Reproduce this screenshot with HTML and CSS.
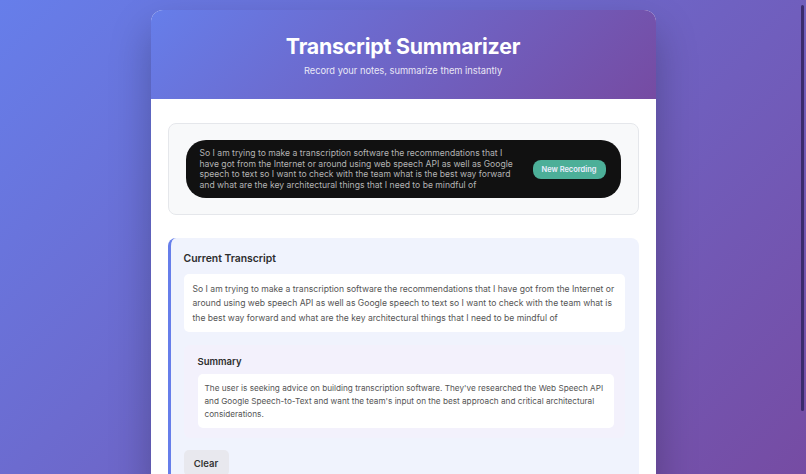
FILE: index.html
```html
<!DOCTYPE html>
<html lang="en">
  <head>
    <meta charset="UTF-8" />
    <title>Transcript Summarizer</title>
    <link rel="stylesheet" href="styles.css">
  </head>
  <body>
    <div class="app">
      <div class="header">
        <h1>Transcript Summarizer</h1>
        <p>Record your notes, summarize them instantly</p>
      </div>

      <div class="main">
        <div class="recorder">
          <div class="recorder-pill">
            <div class="live-text">So I am trying to make a transcription software the recommendations that I have got from the Internet or around using web speech API as well as Google speech to text so I want to check with the team what is the best way forward and what are the key architectural things that I need to be mindful of</div>
            <button class="new-btn">New Recording</button>
          </div>
        </div>

        <div class="transcript">
          <h2>Current Transcript</h2>
          <div class="transcript-text">So I am trying to make a transcription software the recommendations that I have got from the Internet or around using web speech API as well as Google speech to text so I want to check with the team what is the best way forward and what are the key architectural things that I need to be mindful of</div>

          <div class="summary">
            <h3>Summary</h3>
            <div class="summary-text">The user is seeking advice on building transcription software. They've researched the Web Speech API and Google Speech-to-Text and want the team's input on the best approach and critical architectural considerations.</div>
          </div>

          <div class="actions">
            <button class="clear-btn">Clear</button>
          </div>
        </div>
      </div>
    </div>

    <div class="scrollbar"></div>
  </body>
</html>
```

FILE: styles.css
```css
* {
  margin: 0;
  padding: 0;
  box-sizing: border-box;
}

body {
  font-family: Inter, "Noto Sans", sans-serif;
  background: linear-gradient(135deg, #667eea, #764ba2);
  min-height: 100vh;
  overflow: hidden;
  color: #333;
}

.app {
  width: 505px;
  margin: 10px auto 0;
  background: white;
  border-radius: 12px 12px 0 0;
  overflow: hidden;
  box-shadow: 0 20px 40px rgba(0, 0, 0, 0.25);
  height: 480px;
}

.header {
  background: linear-gradient(135deg, #667eea, #764ba2);
  color: white;
  text-align: center;
  padding: 22px 20px 21px;
}

.header h1 {
  font-size: 21.3px;
  font-weight: 700;
  line-height: 29px;
  letter-spacing: -0.2px;
}

.header p {
  font-size: 9.3px;
  line-height: 14px;
  margin-top: 3px;
  opacity: 0.85;
}

.main {
  padding: 24px 17px 0;
}

.recorder {
  background: #f8f9fa;
  border: 1px solid #e5e7eb;
  border-radius: 8px;
  padding: 16px 17px;
}

.recorder-pill {
  display: flex;
  align-items: center;
  gap: 14px;
  background: #111;
  border-radius: 20px;
  padding: 8px 15px 8px 14px;
  height: 58px;
}

.live-text {
  flex: 1;
  font-size: 8.6px;
  line-height: 10.5px;
  color: #b4b4b4;
}

.new-btn {
  background: #4caf98;
  color: #eef;
  border: none;
  border-radius: 8px;
  font-family: inherit;
  font-size: 7.5px;
  font-weight: 600;
  width: 73px;
  height: 19px;
  white-space: nowrap;
}

.transcript {
  margin-top: 23px;
  background: #f0f3fd;
  border-left: 3px solid #667eea;
  border-radius: 8px;
  padding: 14px 14px 20px 13px;
}

.transcript h2 {
  font-size: 10.4px;
  font-weight: 600;
  line-height: 14px;
  color: #2d2d2d;
  margin-bottom: 8px;
}

.transcript-text {
  background: white;
  border-radius: 5px;
  padding: 8px 9px;
  font-size: 8.6px;
  line-height: 14.3px;
  color: #555;
  height: 58px;
}

.summary {
  margin-top: 13px;
  background: #f3f1fc;
  border-radius: 6px;
  padding: 10px 11px 10px 14px;
}

.summary h3 {
  font-size: 9.5px;
  font-weight: 600;
  line-height: 14px;
  color: #2d2d2d;
  margin-bottom: 5px;
}

.summary-text {
  background: white;
  border-radius: 5px;
  padding: 8px 7px;
  font-size: 8.2px;
  line-height: 13px;
  color: #555;
  height: 54px;
}

.actions {
  margin-top: 12px;
}

.clear-btn {
  background: #e8e8ee;
  color: #333;
  border: none;
  border-radius: 5px;
  font-family: inherit;
  font-size: 9.5px;
  font-weight: 600;
  width: 45px;
  height: 26px;
}

.scrollbar {
  position: fixed;
  top: 5px;
  right: 2px;
  width: 3px;
  height: 406px;
  background: #3a2b6c;
  border-radius: 2px;
}
```
